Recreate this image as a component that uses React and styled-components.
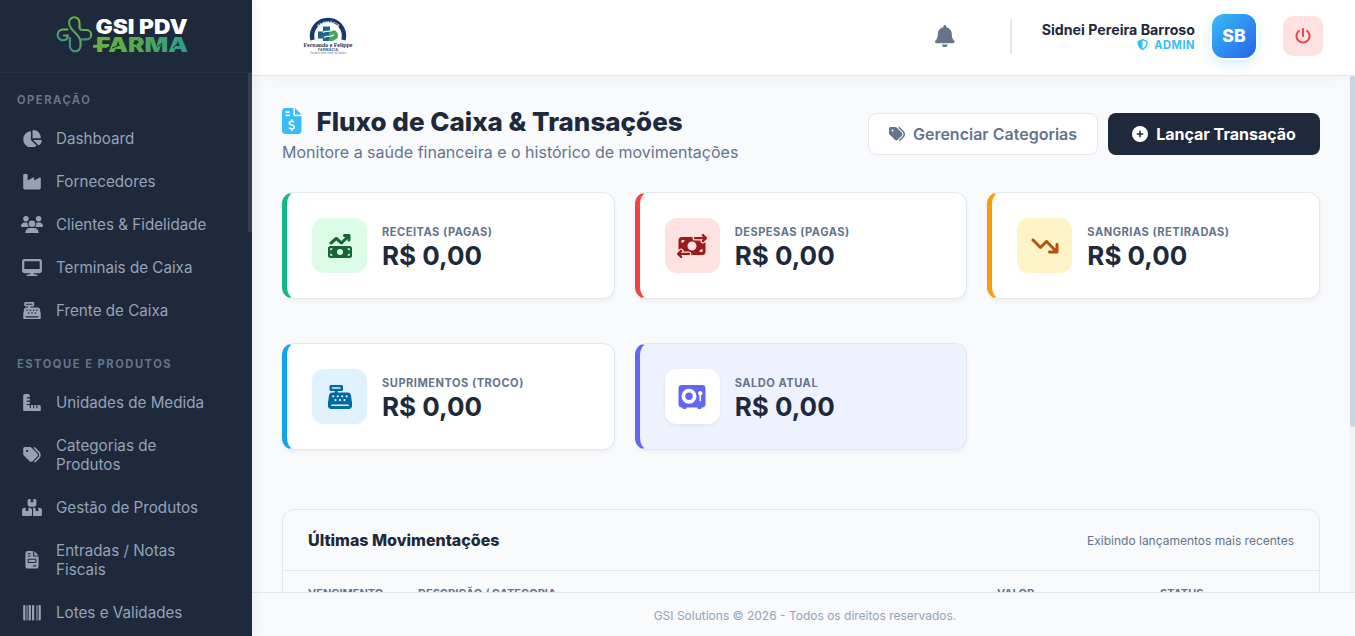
import React from 'react';
import styled, { createGlobalStyle } from 'styled-components';
import {
  FaArrowTrendDown,
  FaBarcode,
  FaBell,
  FaBoxesStacked,
  FaCashRegister,
  FaChartPie,
  FaCirclePlus,
  FaDesktop,
  FaFileInvoice,
  FaFileInvoiceDollar,
  FaIndustry,
  FaMoneyBillTransfer,
  FaMoneyBillTrendUp,
  FaPowerOff,
  FaRulerCombined,
  FaShieldHalved,
  FaTags,
  FaUsers,
  FaVault,
} from 'react-icons/fa6';

const GlobalStyle = createGlobalStyle`
  * {
    box-sizing: border-box;
  }

  body {
    margin: 0;
    overflow: hidden;
    background-color: #f8fafc;
    color: #1e293b;
    font-family: Inter, 'Liberation Sans', sans-serif;
    font-size: 16px;
  }

  svg {
    display: block;
    flex-shrink: 0;
  }
`;

const Layout = styled.div`
  display: flex;
  height: 100vh;
`;

const Sidebar = styled.aside`
  display: flex;
  flex-direction: column;
  flex: 0 0 252px;
  background-color: #1e293b;
  box-shadow: 4px 0 10px rgba(0, 0, 0, 0.05);
  z-index: 2;
`;

const Brand = styled.div`
  display: flex;
  justify-content: center;
  flex: 0 0 73px;
  padding-right: 4px;
  border-bottom: 1px solid rgba(255, 255, 255, 0.05);
`;

const SidebarBody = styled.div`
  display: flex;
  flex: 1;
  min-height: 0;
`;

const Nav = styled.nav`
  flex: 1;
  overflow: hidden;
  padding-top: 20px;
`;

const Scrollbar = styled.div`
  flex: 0 0 ${(props) => props.$width}px;
  background-color: ${(props) => props.$track || 'transparent'};
`;

const ScrollThumb = styled.div`
  height: ${(props) => props.$height}px;
  border-radius: ${(props) => props.$radius || 0}px;
  background-color: ${(props) => props.$color};
`;

const NavHeading = styled.div`
  height: 14px;
  margin-bottom: 10px;
  padding-left: 17px;
  color: #64748b;
  font-size: 11.2px;
  font-weight: 700;
  line-height: 14px;
  letter-spacing: 1.5px;
`;

const NavGroup = styled.div`
  margin-bottom: 25px;
`;

const NavItem = styled.a`
  display: flex;
  align-items: center;
  gap: 12px;
  padding: 12px 33px 12px 20px;
  color: #94a3b8;
  font-size: 15.2px;
  line-height: 19px;
`;

const NavIcon = styled.span`
  display: flex;
  justify-content: center;
  flex: 0 0 24px;
  font-size: 17.6px;

  svg {
    width: 1.25em;
  }
`;

const Main = styled.div`
  display: flex;
  flex-direction: column;
  flex: 1;
  min-width: 0;
`;

const Header = styled.header`
  display: flex;
  align-items: center;
  flex: 0 0 76px;
  padding: 0 32px 4px 50px;
  background-color: #fff;
  border-bottom: 1px solid #e2e8f0;
  box-shadow: 0 4px 20px rgba(0, 0, 0, 0.03);
  z-index: 1;
`;

const BellIcon = styled(FaBell)`
  width: 0.875em;
  margin: 1px 0 0 auto;
  color: #64748b;
  font-size: 22.4px;
`;

const HeaderDivider = styled.div`
  width: 2px;
  height: 35px;
  margin: 1px 30px 0 55px;
  background-color: #e2e8f0;
`;

const UserInfo = styled.div`
  display: flex;
  flex-direction: column;
  align-items: flex-end;
  margin-top: 2px;
`;

const UserName = styled.span`
  font-size: 14.2px;
  font-weight: 700;
  line-height: 17px;
`;

const UserRole = styled.span`
  display: flex;
  align-items: center;
  gap: 6px;
  color: #38bdf8;
  font-size: 11.1px;
  font-weight: 700;
  line-height: 14px;
  letter-spacing: 0.5px;
`;

const Avatar = styled.div`
  display: flex;
  align-items: center;
  justify-content: center;
  width: 44px;
  height: 44px;
  margin: 0 27px 0 17px;
  border-radius: 12px;
  background: linear-gradient(135deg, #38bdf8, #2563eb);
  box-shadow: 0 0 0 2px #fff, 0 4px 12px rgba(56, 189, 248, 0.3);
  color: #fff;
  font-size: 17.6px;
  font-weight: 800;
`;

const LogoutButton = styled.button`
  display: flex;
  align-items: center;
  justify-content: center;
  width: 40px;
  height: 40px;
  padding: 0;
  border: none;
  border-radius: 10px;
  background-color: #fee2e2;
  color: #ef4444;
  font-size: 16px;
`;

const ContentRow = styled.div`
  display: flex;
  flex: 1;
  min-height: 0;
`;

const Content = styled.main`
  flex: 1;
  overflow: hidden;
  padding: 29px 30px 0;
`;

const PageHeader = styled.div`
  display: flex;
  align-items: center;
  justify-content: space-between;
  height: 58px;
  margin-bottom: 29px;
`;

const PageHeading = styled.div`
  padding-bottom: 2px;
`;

const PageTitle = styled.h1`
  display: flex;
  align-items: center;
  gap: 15px;
  margin: 0;
  color: #1e293b;
  font-size: 26px;
  font-weight: 800;
  line-height: 33px;

  svg {
    width: 0.75em;
    color: #38bdf8;
  }
`;

const PageSubtitle = styled.p`
  margin: 5px 0 0;
  color: #64748b;
  font-size: 16px;
  line-height: 19px;
`;

const Actions = styled.div`
  display: flex;
  gap: 10px;
`;

const ActionButton = styled.button`
  display: flex;
  align-items: center;
  justify-content: center;
  gap: 8px;
  width: ${(props) => (props.$primary ? 212 : 230)}px;
  height: 42px;
  padding: 0;
  border: ${(props) => (props.$primary ? 'none' : '1px solid #e2e8f0')};
  border-radius: 8px;
  background-color: ${(props) => (props.$primary ? '#1e293b' : '#fff')};
  color: ${(props) => (props.$primary ? '#fff' : '#64748b')};
  font-family: inherit;
  font-size: 16px;
  font-weight: ${(props) => (props.$primary ? 700 : 600)};
`;

const Cards = styled.div`
  display: grid;
  grid-template-columns: repeat(3, 1fr);
  gap: 44px 20px;
  margin-bottom: 59px;
`;

const Card = styled.div`
  display: flex;
  align-items: center;
  gap: 15px;
  height: 107px;
  padding: 0 25px;
  border: 1px solid #e2e8f0;
  border-left: 5px solid ${(props) => props.$accent};
  border-radius: 12px;
  background-color: ${(props) => props.$background || '#fff'};
  box-shadow: 0 2px 4px rgba(0, 0, 0, 0.05);
`;

const CardIcon = styled.div`
  display: flex;
  align-items: center;
  justify-content: center;
  width: 55px;
  height: 55px;
  border-radius: 12px;
  background-color: ${(props) => props.$background};
  box-shadow: ${(props) => (props.$raised ? '0 2px 4px rgba(0, 0, 0, 0.05)' : 'none')};
  color: ${(props) => props.$color};
  font-size: 24px;

  svg {
    width: 1.25em;
  }
`;

const CardText = styled.div`
  padding-top: 5px;
`;

const CardLabel = styled.div`
  color: #64748b;
  font-size: 11.1px;
  font-weight: 700;
  line-height: 14px;
  letter-spacing: 0.5px;
`;

const CardValue = styled.div`
  margin-top: 1px;
  color: #1e293b;
  font-size: 26px;
  font-weight: 700;
  line-height: 32px;
`;

const TablePanel = styled.section`
  height: 300px;
  border: 1px solid #e2e8f0;
  border-radius: 12px;
  background-color: #f8fafc;
`;

const TableHeader = styled.div`
  display: flex;
  align-items: center;
  justify-content: space-between;
  height: 61px;
  padding: 0 25px;
  border-bottom: 1px solid #e2e8f0;
`;

const TableTitle = styled.h2`
  margin: 0;
  font-size: 16px;
  font-weight: 800;
`;

const TableHint = styled.span`
  padding-top: 1px;
  color: #64748b;
  font-size: 12px;
`;

const TableColumns = styled.div`
  display: grid;
  grid-template-columns: 110px 579px 163px 1fr;
  padding: 15px 25px;
  color: #64748b;
  font-size: 11px;
  font-weight: 700;
  line-height: 14px;
`;

const Footer = styled.footer`
  display: flex;
  align-items: center;
  justify-content: center;
  flex: 0 0 44px;
  padding: 2px 0 0 3px;
  border-top: 1px solid #e2e8f0;
  background-color: #f8fafc;
  color: #94a3b8;
  font-size: 12px;
`;

const navGroups = [
  {
    title: 'OPERAÇÃO',
    items: [
      { label: 'Dashboard', icon: FaChartPie },
      { label: 'Fornecedores', icon: FaIndustry },
      { label: 'Clientes & Fidelidade', icon: FaUsers },
      { label: 'Terminais de Caixa', icon: FaDesktop },
      { label: 'Frente de Caixa', icon: FaCashRegister },
    ],
  },
  {
    title: 'ESTOQUE E PRODUTOS',
    items: [
      { label: 'Unidades de Medida', icon: FaRulerCombined },
      { label: 'Categorias de Produtos', icon: FaTags },
      { label: 'Gestão de Produtos', icon: FaBoxesStacked },
      { label: 'Entradas / Notas Fiscais', icon: FaFileInvoice },
      { label: 'Lotes e Validades', icon: FaBarcode },
    ],
  },
];

const cards = [
  {
    label: 'RECEITAS (PAGAS)',
    icon: FaMoneyBillTrendUp,
    accent: '#10b981',
    iconBackground: '#dcfce7',
    iconColor: '#166534',
  },
  {
    label: 'DESPESAS (PAGAS)',
    icon: FaMoneyBillTransfer,
    accent: '#ef4444',
    iconBackground: '#fee2e2',
    iconColor: '#991b1b',
  },
  {
    label: 'SANGRIAS (RETIRADAS)',
    icon: FaArrowTrendDown,
    accent: '#f59e0b',
    iconBackground: '#fef3c7',
    iconColor: '#b45309',
  },
  {
    label: 'SUPRIMENTOS (TROCO)',
    icon: FaCashRegister,
    accent: '#0ea5e9',
    iconBackground: '#e0f2fe',
    iconColor: '#0369a1',
  },
  {
    label: 'SALDO ATUAL',
    icon: FaVault,
    accent: '#6366f1',
    background: '#eef2ff',
    iconBackground: '#fff',
    iconColor: '#6366f1',
    raised: true,
  },
];

const GsiLogo = () => (
  <svg width="136" height="72" viewBox="0 0 136 72" fontFamily="Inter, sans-serif">
    <defs>
      <linearGradient id="brandText" x1="0" x2="1">
        <stop offset="0" stopColor="#6ab344" />
        <stop offset="0.45" stopColor="#55a94d" />
        <stop offset="1" stopColor="#2b9c91" />
      </linearGradient>
      <linearGradient id="brandMark" x1="0" y1="1" x2="0.7" y2="0">
        <stop offset="0" stopColor="#2d8f96" />
        <stop offset="1" stopColor="#72b63f" />
      </linearGradient>
    </defs>
    <g fill="none" stroke="url(#brandMark)" strokeWidth="2.1" strokeLinecap="round">
      <path d="M11.5 29.500H7a5.400 5.400 0 0 0 0 10.800c3 0 4.700-1.800 4.700-4.800H8" />
      <path d="M23.500 27v-4.500a5.200 5.200 0 0 0-10.400 0c0 9 11.400 11 11.400 19.500v4a5.300 5.300 0 0 1-10.600 0V38" />
      <path d="M23.500 27c0 2 1 3 3 3h4a4.700 4.700 0 0 1 0 9.400H26" />
    </g>
    <text x="39.500" y="33.800" fill="#fff" fontSize="19.500" fontWeight="900" textLength="92" lengthAdjust="spacingAndGlyphs">
      GSI PDV
    </text>
    <text x="40" y="52.300" fill="url(#brandText)" fontSize="20" fontWeight="900" textLength="92" lengthAdjust="spacingAndGlyphs">
      FARMA
    </text>
    <path d="M37 44.800h14v3H37z" fill="#65b145" />
    <path d="M56 48l5-2M77 43l4 2M101 47l4-3M117 48l5-5" stroke="#1e293b" strokeWidth="1" />
  </svg>
);

const PharmacyLogo = () => (
  <svg width="54" height="42" viewBox="-1 -2.500 54 42">
    <defs>
      <path id="logoArc" d="M11 21a14.500 14.500 0 0 1 29 0" />
    </defs>
    <path d="M9.500 22.500a16 16 0 1 1 31 0" fill="none" stroke="#173b69" strokeWidth="4.500" />
    <text fill="#fff" fontSize="4" fontWeight="700" fontFamily="Inter, sans-serif" textAnchor="middle">
      <textPath href="#logoArc" startOffset="50%">FARMÁCIA</textPath>
    </text>
    <path d="M20 9h7v5h5v7h-5v4h-7v-4h-5v-7h5z" fill="#1b648c" />
    <path d="M27 13h5c3 2 4 5 2 8l-5 3h-5c5-4 0-5 3-11z" fill="#43a35f" />
    <path d="M20 15c3-3 6 1 10-3M21 20c4-3 6 1 10-3" fill="none" stroke="#e8f6f4" strokeWidth="1.200" />
    <rect y="23.500" width="50" height="8" fill="#fff" />
    <text x="0.500" y="29.500" fill="#173b69" fontSize="7" fontWeight="700" fontFamily="'Liberation Serif', serif" textLength="49" lengthAdjust="spacingAndGlyphs">
      Fernando e Felippe
    </text>
    <text x="15" y="33.500" fill="#356088" fontSize="3.500" fontWeight="700" fontFamily="Inter, sans-serif" textLength="20">
      FARMÁCIA
    </text>
    <text x="7" y="36.700" fill="#73869c" fontSize="2.800" fontFamily="Inter, sans-serif" textLength="36">
      Saúde e bem-estar da família
    </text>
  </svg>
);

const SummaryCard = ({ card }) => {
  const Icon = card.icon;

  return (
    <Card $accent={card.accent} $background={card.background}>
      <CardIcon $background={card.iconBackground} $color={card.iconColor} $raised={card.raised}>
        <Icon />
      </CardIcon>
      <CardText>
        <CardLabel>{card.label}</CardLabel>
        <CardValue>R$ 0,00</CardValue>
      </CardText>
    </Card>
  );
};

const App = () => {
  return (
    <Layout>
      <GlobalStyle />
      <Sidebar>
        <Brand>
          <GsiLogo />
        </Brand>
        <SidebarBody>
          <Nav>
            {navGroups.map((group) => (
              <NavGroup key={group.title}>
                <NavHeading>{group.title}</NavHeading>
                {group.items.map(({ label, icon: Icon }) => (
                  <NavItem key={label}>
                    <NavIcon>
                      <Icon />
                    </NavIcon>
                    <span>{label}</span>
                  </NavItem>
                ))}
              </NavGroup>
            ))}
          </Nav>
          <Scrollbar $width={4}>
            <ScrollThumb $height={159} $color="#353f4f" />
          </Scrollbar>
        </SidebarBody>
      </Sidebar>
      <Main>
        <Header>
          <PharmacyLogo />
          <BellIcon />
          <HeaderDivider />
          <UserInfo>
            <UserName>Sidnei Pereira Barroso</UserName>
            <UserRole>
              <FaShieldHalved />
              ADMIN
            </UserRole>
          </UserInfo>
          <Avatar>SB</Avatar>
          <LogoutButton>
            <FaPowerOff />
          </LogoutButton>
        </Header>
        <ContentRow>
          <Content>
            <PageHeader>
              <PageHeading>
                <PageTitle>
                  <FaFileInvoiceDollar />
                  Fluxo de Caixa & Transações
                </PageTitle>
                <PageSubtitle>
                  Monitore a saúde financeira e o histórico de movimentações
                </PageSubtitle>
              </PageHeading>
              <Actions>
                <ActionButton>
                  <FaTags />
                  Gerenciar Categorias
                </ActionButton>
                <ActionButton $primary>
                  <FaCirclePlus />
                  Lançar Transação
                </ActionButton>
              </Actions>
            </PageHeader>
            <Cards>
              {cards.map((card) => (
                <SummaryCard key={card.label} card={card} />
              ))}
            </Cards>
            <TablePanel>
              <TableHeader>
                <TableTitle>Últimas Movimentações</TableTitle>
                <TableHint>Exibindo lançamentos mais recentes</TableHint>
              </TableHeader>
              <TableColumns>
                <span>VENCIMENTO</span>
                <span>DESCRIÇÃO / CATEGORIA</span>
                <span>VALOR</span>
                <span>STATUS</span>
              </TableColumns>
            </TablePanel>
          </Content>
          <Scrollbar $width={5} $track="#f1f5f9">
            <ScrollThumb $height={351} $radius={3} $color="#cbd5e1" />
          </Scrollbar>
        </ContentRow>
        <Footer>GSI Solutions © 2026 - Todos os direitos reservados.</Footer>
      </Main>
    </Layout>
  );
};

export default App;
